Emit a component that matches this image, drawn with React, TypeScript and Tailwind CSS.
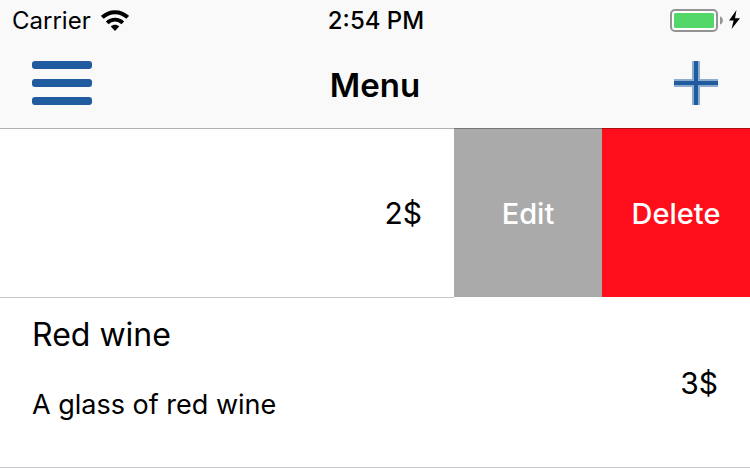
import React from "react";

function WifiIcon() {
  return (
    <svg width="28" height="21" viewBox="0 0 28 21" role="img" aria-label="Wi-Fi">
      <path d="M1.3 7.4C8.4 0.4 19.6 0.4 26.7 7.4" fill="none" stroke="#000" strokeWidth="4" />
      <path d="M6.2 12.8C10.6 8.5 17.4 8.5 21.8 12.8" fill="none" stroke="#000" strokeWidth="3.8" />
      <path d="M14 21L9.8 16.6C12 14.2 16 14.2 18.2 16.6Z" />
    </svg>
  );
}

function BatteryIcon() {
  return (
    <svg width="70" height="23" viewBox="0 0 70 23" role="img" aria-label="Battery charging">
      <rect x="1" y="1" width="46" height="21" rx="4" fill="#fff" stroke="#949494" strokeWidth="2" />
      <rect x="4" y="4" width="40" height="15" rx="1.5" fill="#53d769" />
      <path d="M50 7.5C53.8 8.6 53.8 14.4 50 15.5Z" fill="#949494" />
      <path d="M66.5 1L59 11.6H63.6L61.6 20L70 9.2H65Z" />
    </svg>
  );
}

function MenuIcon() {
  return (
    <svg width="60" height="44" viewBox="0 0 60 44" fill="#215b9f" aria-hidden="true">
      <rect width="60" height="8" rx="3" />
      <rect y="18" width="60" height="8" rx="3" />
      <rect y="36" width="60" height="8" rx="3" />
    </svg>
  );
}

function PlusIcon() {
  return (
    <svg width="44" height="44" viewBox="0 0 44 44" shapeRendering="crispEdges" aria-hidden="true">
      <path d="M18 0H26V18H44V26H26V44H18V26H0V18H18Z" fill="#8dabcc" />
      <path d="M20 0H24V20H44V24H24V44H20V24H0V20H20Z" fill="#215b9f" />
    </svg>
  );
}

export default function App() {
  return (
    <div className="w-full bg-white font-['Inter',sans-serif] text-black">
      <header className="relative z-10 bg-[#f9f9f9] pb-0.5 shadow-[0_1px_0_rgba(0,0,0,0.3)]">
        <div className="grid h-10 grid-cols-3 items-center pr-[10px] pl-3 text-2xl">
          <div className="flex items-center gap-[10px]">
            <span className="pt-0.5">Carrier</span>
            <WifiIcon />
          </div>
          <time className="pt-0.5 text-center font-medium whitespace-nowrap">2:54 PM</time>
          <div className="flex justify-end">
            <BatteryIcon />
          </div>
        </div>
        <div className="grid h-[86px] grid-cols-3 items-center px-8">
          <button type="button" aria-label="Open menu" className="justify-self-start">
            <MenuIcon />
          </button>
          <h1 className="pt-1 text-center text-[33px] leading-10 font-semibold">Menu</h1>
          <button type="button" aria-label="Add item" className="justify-self-end">
            <PlusIcon />
          </button>
        </div>
      </header>

      <main>
        <ul>
          <li className="flex h-[170px]">
            <div className="flex flex-1 items-center justify-end border-b border-[#c8c7cc] pr-8">
              <span className="text-[30px] leading-10">2$</span>
            </div>
            <div className="mb-px flex text-[29px] leading-10 font-medium text-white">
              <button type="button" className="w-[148px] bg-[#aaaaaa] pt-0.5">
                Edit
              </button>
              <button type="button" className="w-[148px] bg-[#fe0e1b] pt-0.5">
                Delete
              </button>
            </div>
          </li>
          <li className="flex h-[170px] items-center justify-between border-b border-[#c8c7cc] px-8">
            <div className="flex flex-col gap-8 pb-7">
              <h2 className="text-[32px] leading-10">Red wine</h2>
              <p className="text-[27px] leading-9">A glass of red wine</p>
            </div>
            <span className="text-[30px] leading-10">3$</span>
          </li>
        </ul>
      </main>
    </div>
  );
}
